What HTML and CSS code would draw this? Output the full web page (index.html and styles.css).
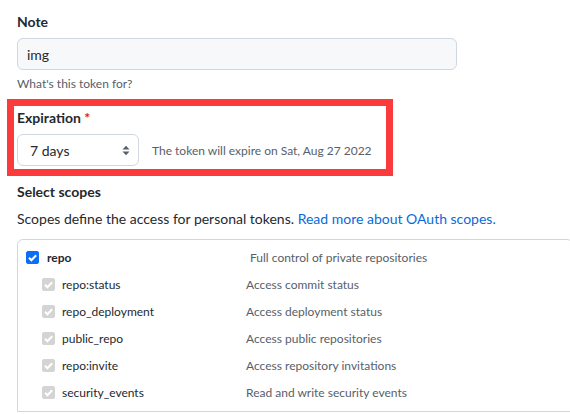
FILE: index.html
```html
<!DOCTYPE html>
<html lang="en">
<head>
<meta charset="utf-8">
<title>New personal access token</title>
<link rel="stylesheet" href="styles.css">
</head>
<body>
<div class="page">
  <div class="label">Note</div>
  <div class="input">img</div>
  <p class="hint">What's this token for?</p>

  <div class="highlight">
    <div class="label">Expiration <span class="req">*</span></div>
    <div class="exp-row">
      <div class="select">
        <span>7 days</span>
        <svg class="arrows" viewBox="0 0 8 11" width="8" height="11"><polygon points="0.5,4.5 4,0.7 7.5,4.5"/><polygon points="0.5,6.5 4,10.3 7.5,6.5"/></svg>
      </div>
      <span class="exp-note">The token will expire on Sat, Aug 27 2022</span>
    </div>
  </div>

  <div class="label scopes-title">Select scopes</div>
  <p class="lead">Scopes define the access for personal tokens. <a href="#">Read more about OAuth scopes.</a></p>

  <div class="scopes">
    <div class="group">
      <div class="row main">
        <span class="cb on"><svg viewBox="0 0 13 13"><path d="M3 6.8l2.4 2.4L10.2 4.2"/></svg></span>
        <span class="name">repo</span>
        <span class="desc">Full control of private repositories</span>
      </div>
      <div class="row sub">
        <span class="cb off"><svg viewBox="0 0 13 13"><path d="M3 6.8l2.4 2.4L10.2 4.2"/></svg></span>
        <span class="name">repo:status</span>
        <span class="desc">Access commit status</span>
      </div>
      <div class="row sub">
        <span class="cb off"><svg viewBox="0 0 13 13"><path d="M3 6.8l2.4 2.4L10.2 4.2"/></svg></span>
        <span class="name">repo_deployment</span>
        <span class="desc">Access deployment status</span>
      </div>
      <div class="row sub">
        <span class="cb off"><svg viewBox="0 0 13 13"><path d="M3 6.8l2.4 2.4L10.2 4.2"/></svg></span>
        <span class="name">public_repo</span>
        <span class="desc">Access public repositories</span>
      </div>
      <div class="row sub">
        <span class="cb off"><svg viewBox="0 0 13 13"><path d="M3 6.8l2.4 2.4L10.2 4.2"/></svg></span>
        <span class="name">repo:invite</span>
        <span class="desc">Access repository invitations</span>
      </div>
      <div class="row sub">
        <span class="cb off"><svg viewBox="0 0 13 13"><path d="M3 6.8l2.4 2.4L10.2 4.2"/></svg></span>
        <span class="name">security_events</span>
        <span class="desc">Read and write security events</span>
      </div>
    </div>
  </div>
</div>
</body>
</html>
```
FILE: styles.css
```css
html, body {
  margin: 0;
  padding: 0;
  overflow: hidden;
  background: #ffffff;
}

body {
  font-family: "Segoe UI", Lato, "Noto Sans", sans-serif;
  color: #24292f;
  font-size: 14px;
  line-height: 21px;
}

.page {
  display: flex;
  flex-direction: column;
  align-items: flex-start;
  padding: 11px 0 0 17px;
}

.label {
  font-weight: 700;
  font-size: 14px;
  line-height: 21px;
}

.req {
  color: #cf222e;
}

.input {
  box-sizing: border-box;
  width: 440px;
  height: 32px;
  margin-top: 6px;
  padding: 0 9px;
  display: flex;
  align-items: center;
  background: #f6f8fa;
  border: 1px solid #d0d7de;
  border-radius: 6px;
  font-size: 14px;
}

.hint {
  margin: 5px 0 0;
  font-size: 12px;
  line-height: 18px;
  color: #57606a;
}

.highlight {
  box-sizing: border-box;
  width: 386px;
  margin: 6px 0 0 -10px;
  padding: 1px 0 3px 3px;
  border: 7px solid #fb3b3b;
}

.exp-row {
  display: flex;
  align-items: center;
  gap: 13px;
  margin-top: 6px;
}

.select {
  box-sizing: border-box;
  width: 122px;
  height: 32px;
  padding: 0 8px 0 12px;
  display: flex;
  align-items: center;
  justify-content: space-between;
  background: #ffffff;
  border: 1px solid #d0d7de;
  border-radius: 6px;
  font-size: 14px;
}

.arrows {
  fill: #57606a;
}

.exp-note {
  font-size: 12px;
  color: #57606a;
}

.scopes-title {
  margin-top: 5px;
}

.lead {
  margin: 6px 0 0;
  font-size: 14px;
  line-height: 21px;
}

.lead a {
  color: #0969da;
  text-decoration: none;
}

.scopes {
  box-sizing: border-box;
  width: 556px;
  margin-top: 10px;
  border: 1px solid #d0d7de;
  border-radius: 6px 6px 0 0;
}

.group {
  padding: 11px 0 5px;
}

.row {
  display: flex;
  align-items: center;
}

.row.main {
  padding: 0 0 7px 8px;
  height: 13px;
  box-sizing: content-box;
}

.row.sub {
  height: 27px;
  padding-left: 24px;
}

.cb {
  box-sizing: border-box;
  width: 13px;
  height: 13px;
  flex: none;
  border-radius: 2px;
  border: 1px solid #767676;
  display: flex;
}

.cb svg {
  width: 13px;
  height: 13px;
  margin: -1px;
}

.cb path {
  fill: none;
  stroke: #ffffff;
  stroke-width: 2;
}

.cb.on {
  background: #0a6ff5;
  border-color: #0a6ff5;
}

.cb.off {
  background: #d4d4d4;
  border-color: #d4d4d4;
}

.name {
  font-size: 12px;
}

.main .name {
  margin-left: 8px;
  width: 203px;
  font-weight: 700;
}

.sub .name {
  margin-left: 7px;
  width: 184px;
}

.desc {
  font-size: 12px;
  color: #57606a;
}
```
